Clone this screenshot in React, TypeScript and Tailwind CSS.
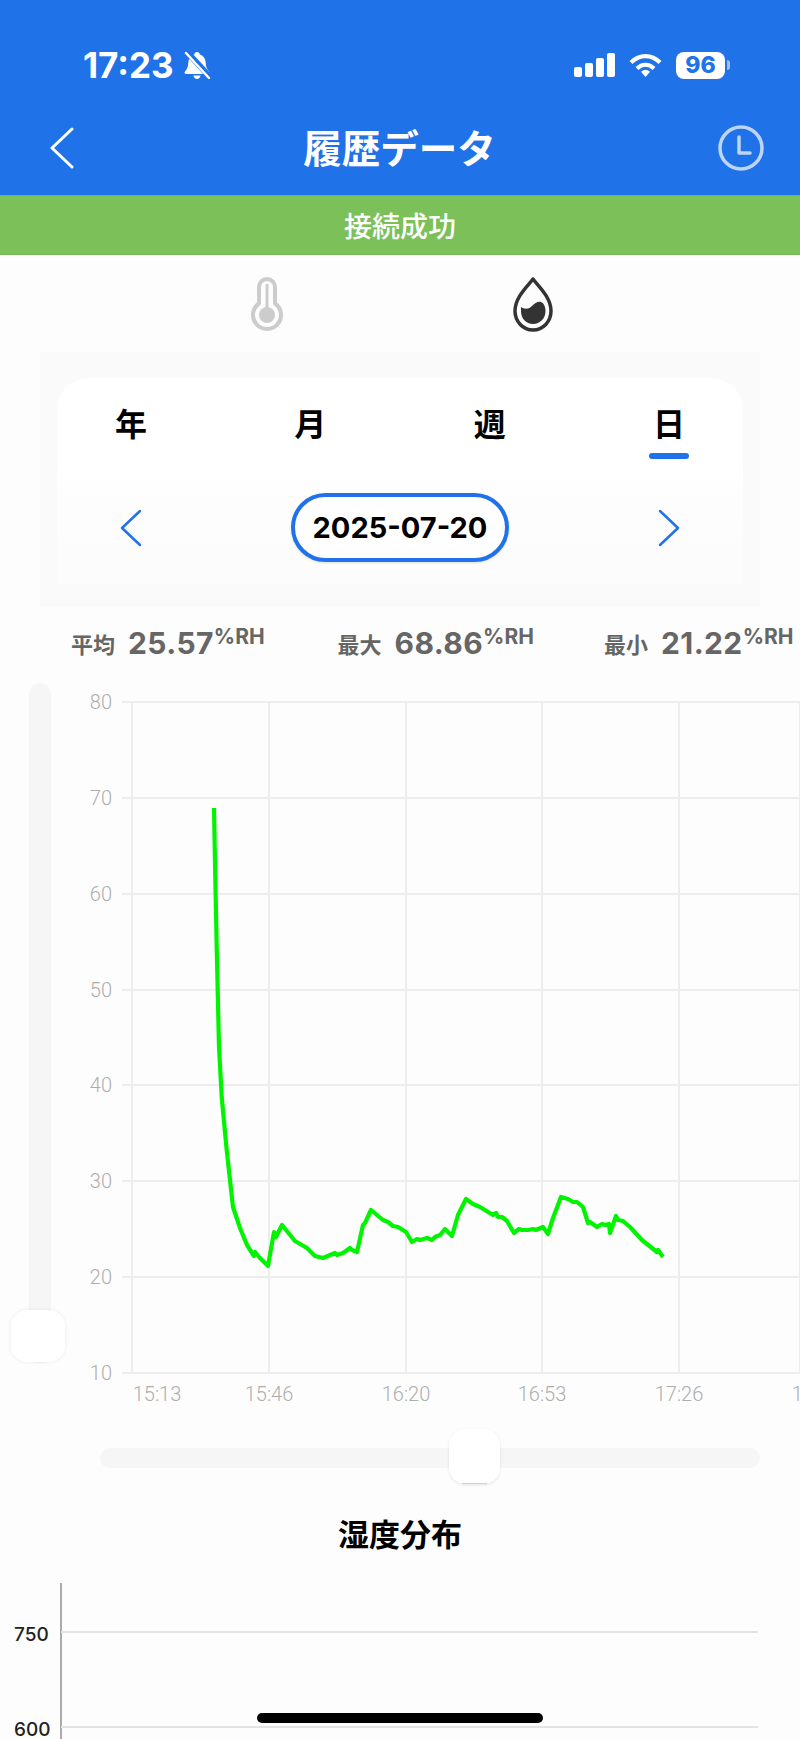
const linePoints =
  "214,808 215,863 216.7,947 219,1047 221.7,1097 226.7,1150 233,1207 240,1228 247,1245 254,1256 255,1252 260,1258 268,1266 274,1232 276,1237 282,1225 295,1241 307,1248 315,1256 323,1258 335,1253 337,1255 343,1253 350,1248 352,1250 357,1252 363,1225 365,1223 371,1210 377,1215 383,1220 388,1222 393,1226 398,1227 406,1232 412,1242 417,1239 420,1240 427,1238 432,1240 435,1237 440,1235 445,1229 452,1236 458,1215 466,1199 473,1204 480,1207 493,1215 496,1213 498,1217 502,1217 507,1221 514,1233 519,1229 522,1230 528,1230 533,1229 536,1230 543,1227 548,1234 553,1218 561,1197 568,1199 573,1202 577,1202 583,1207 588,1223 590,1222 597,1227 602,1224 605,1225 609,1224 610,1233 616,1216 618,1220 623,1221 630,1227 642,1240 657,1252 658,1250 663,1257";

const yTicks = [
  { label: "80", y: 702 },
  { label: "70", y: 798 },
  { label: "60", y: 894 },
  { label: "50", y: 990 },
  { label: "40", y: 1085 },
  { label: "30", y: 1181 },
  { label: "20", y: 1277 },
  { label: "10", y: 1373 },
];

const xTicks = [
  { label: "15:13", x: 132, tx: 157 },
  { label: "15:46", x: 269, tx: 269 },
  { label: "16:20", x: 406, tx: 406 },
  { label: "16:53", x: 542, tx: 542 },
  { label: "17:26", x: 679, tx: 679 },
  { label: "18:00", x: 800, tx: 816 },
];

const stats = [
  { label: "平均", value: "25.57" },
  { label: "最大", value: "68.86" },
  { label: "最小", value: "21.22" },
];

const latin = "font-['Inter','Noto_Sans_CJK_JP',sans-serif]";

function StatusBar() {
  return (
    <div className="flex h-[40px] items-center justify-between pl-[83px] pr-[70px]">
      <div className="flex items-center gap-[9px]">
        <span className={`${latin} text-[35px] font-bold leading-none text-white`}>17:23</span>
        <svg width="28" height="28" viewBox="0 0 28 28" fill="white">
          <path d="M14 1c1.6 0 2.6 1 2.8 2.4 4 1.2 5.7 4.6 5.9 8.6.2 3.6 1.2 6.3 3.3 8.5.9 1 .3 2.5-1.1 2.5H3.1C1.7 23 1.1 21.5 2 20.5c2.1-2.2 3.1-4.9 3.3-8.5.2-4 1.9-7.4 5.9-8.6C11.400 2 12.400 1 14 1z" />
          <path d="M10.500 24.500h7C17.200 26.600 15.800 28 14 28s-3.200-1.400-3.500-3.500z" />
          <path d="M4 1l23 25" stroke="#2072e8" strokeWidth="6" />
          <path d="M3 2l23 25" stroke="white" strokeWidth="2.400" strokeLinecap="round" />
        </svg>
      </div>
      <div className="flex items-center gap-[14px]">
        <svg width="41" height="24" viewBox="0 0 41 24" fill="white">
          <rect x="0" y="14" width="8" height="10" rx="2" />
          <rect x="11" y="10" width="8" height="14" rx="2" />
          <rect x="22" y="5" width="8" height="19" rx="2" />
          <rect x="33" y="0" width="8" height="24" rx="2" />
        </svg>
        <svg width="33" height="24" viewBox="0 0 33 24" fill="none" stroke="white" strokeWidth="4.200">
          <path d="M2 9.500C10.500 1 22.500 1 31 9.500" />
          <path d="M8 15.500c5-5 12-5 17 0" />
          <path d="M12 18.800c3-2.700 6-2.700 9 0L16.500 24z" fill="white" stroke="none" />
        </svg>
        <div className="flex items-center gap-[2px]">
          <div className="flex h-[27px] w-[49px] items-center justify-center rounded-[8px] bg-white">
            <span className={`${latin} text-[23px] font-extrabold leading-none text-[#2072e8]`}>96</span>
          </div>
          <div className="h-[10px] w-[3px] rounded-r-full bg-[#9dc0f3]" />
        </div>
      </div>
    </div>
  );
}

function NavBar() {
  return (
    <div className="mt-[38px] flex h-[50px] items-center justify-between pl-[50px] pr-[36px]">
      <svg width="24" height="42" viewBox="0 0 24 42" fill="none" stroke="white" strokeWidth="3" strokeLinecap="round" strokeLinejoin="round">
        <path d="M22 2L2 21l20 19" />
      </svg>
      <h1 className="mb-[4px] ml-[7px] font-['Noto_Sans_CJK_JP',sans-serif] text-[38.500px] font-bold leading-none text-white">履歴データ</h1>
      <svg width="46" height="46" viewBox="0 0 46 46" fill="none" stroke="#bcd5f8" strokeWidth="3.500" strokeLinecap="round" strokeLinejoin="round">
        <circle cx="23" cy="23" r="21" />
        <path d="M21 12v16h11" />
      </svg>
    </div>
  );
}

function TempIcon() {
  return (
    <svg width="34" height="56" viewBox="0 0 34 56" fill="none" stroke="#cccccc" strokeWidth="4">
      <path d="M9 10a8 8 0 0 1 16 0V26.500a14 14 0 1 1-16 0z" strokeLinejoin="round" />
      <path d="M17 7v24" strokeWidth="3" />
      <circle cx="17" cy="38" r="8" fill="#cccccc" stroke="none" />
    </svg>
  );
}

function DropIcon() {
  return (
    <svg width="40" height="55" viewBox="0 0 40 55" fill="none">
      <path d="M20 2C15 9 2 20 2 34c0 10.500 8 19 18 19s18-8.500 18-19C38 20 25 9 20 2z" stroke="#333333" strokeWidth="3.500" strokeLinejoin="round" />
      <path d="M8 30c3 2 7 3 11-1 3-3 6-5 9-4 3 1 4.500 5 4.500 9 0 7.500-5.500 13-12.500 13S8 41.500 8 34z" fill="#333333" />
    </svg>
  );
}

function DateChevron({ dir }: { dir: "left" | "right" }) {
  return (
    <svg width="22" height="38" viewBox="0 0 22 38" fill="none" stroke="#2072e8" strokeWidth="2.500" strokeLinecap="round" strokeLinejoin="round">
      <path d={dir === "left" ? "M20 2L2 19l18 17" : "M2 2l18 17L2 36"} />
    </svg>
  );
}

function DateCard() {
  return (
    <div className="mx-[40px] h-[255px] bg-[#fafafa] px-[17px] pt-[26px]">
      <div className="h-[206px] rounded-t-[32px] bg-gradient-to-b from-white from-40% to-[#fcfcfc] to-80%">
        <div className="flex justify-between px-[58px] pt-[28px]">
          {["年", "月", "週"].map((t) => (
            <span key={t} className="font-['Noto_Sans_CJK_JP',sans-serif] text-[32px] font-bold leading-[32px] text-black">{t}</span>
          ))}
          <div className="relative">
            <span className="font-['Noto_Sans_CJK_JP',sans-serif] text-[32px] font-bold leading-[32px] text-black">日</span>
            <div className="absolute left-[-4px] top-[47px] h-[6px] w-[40px] rounded-full bg-[#2072e8]" />
          </div>
        </div>
        <div className="mt-[51px] flex items-center justify-between px-[63px]">
          <DateChevron dir="left" />
          <div className={`${latin} flex h-[69px] w-[218px] items-center justify-center rounded-full border-[4px] border-[#2072e8] bg-white text-[29px] font-bold text-black shadow-sm`}>
            2025-07-20
          </div>
          <DateChevron dir="right" />
        </div>
      </div>
    </div>
  );
}

function Stats() {
  return (
    <div className="flex h-[76px] items-center whitespace-nowrap pb-[4px] pl-[71px]">
      {stats.map((s) => (
        <div key={s.label} className="flex w-[266.500px] shrink-0 items-center font-bold text-[#666666]">
          <span className="font-['Noto_Sans_CJK_JP',sans-serif] text-[22px]">{s.label}</span>
          <span className={`${latin} ml-[13px] text-[30px] tracking-[0.4px]`}>{s.value}</span>
          <span className={`${latin} mb-[12px] text-[21px]`}>%RH</span>
        </div>
      ))}
    </div>
  );
}

function VerticalSlider() {
  return (
    <div className="w-[80px] shrink-0 pl-[29px]">
      <div className="relative h-[680px] w-[22px] rounded-full bg-[#f6f6f6]">
        <div className="absolute left-[-18px] top-[627px] h-[52px] w-[54px] rounded-[16px] bg-white shadow-[0_0_4px_rgba(0,0,0,0.08)]" />
      </div>
    </div>
  );
}

function LineChart() {
  return (
    <svg width="720" height="727" viewBox="80 683 720 727" className="shrink-0 font-['Roboto',sans-serif]">
      {yTicks.map((t) => (
        <g key={t.label}>
          <line x1="122" x2="800" y1={t.y} y2={t.y} stroke="#ededed" strokeWidth="2" />
          <text x="112" y={t.y + 7} textAnchor="end" fontSize="20" fontWeight="300" fill="#adadad">{t.label}</text>
        </g>
      ))}
      {xTicks.map((t) => (
        <g key={t.label}>
          <line x1={t.x} x2={t.x} y1="702" y2="1373" stroke="#ededed" strokeWidth="2" />
          <text x={t.tx} y="1401" textAnchor="middle" fontSize="20" fontWeight="300" fill="#adadad">{t.label}</text>
        </g>
      ))}
      <polyline points={linePoints} fill="none" stroke="#00f400" strokeWidth="4.200" strokeLinejoin="round" />
    </svg>
  );
}

function HorizontalSlider() {
  return (
    <div className="mt-[19px] flex justify-end pr-[40px]">
      <div className="relative mt-[19px] h-[20px] w-[660px] rounded-full bg-[#f6f6f6]">
        <div className="absolute left-[349px] top-[-19px] h-[55px] w-[51px] rounded-[16px] bg-white shadow-[0_1px_3px_rgba(0,0,0,0.1)]">
          <div className="absolute bottom-0 left-[13px] h-px w-[25px] bg-[#d0d0d0]" />
        </div>
      </div>
    </div>
  );
}

function BarChart() {
  return (
    <svg width="800" height="156" viewBox="0 1583 800 156" className="mt-[25px] block font-['Inter',sans-serif]">
      <line x1="61" x2="61" y1="1583" y2="1739" stroke="#aaaaaa" strokeWidth="2" />
      <line x1="61" x2="758" y1="1632" y2="1632" stroke="#e3e3e3" strokeWidth="2" />
      <line x1="61" x2="758" y1="1727" y2="1727" stroke="#e3e3e3" strokeWidth="2" />
      <text x="14" y="1641" fontSize="19" fontWeight="500" fill="#222222">750</text>
      <text x="14" y="1736" fontSize="19" fontWeight="500" fill="#222222">600</text>
    </svg>
  );
}

export default function App() {
  return (
    <div className="relative h-[1739px] w-[800px] overflow-hidden bg-[#fdfdfd]">
      <header className="h-[195px] bg-[#2072e8] pt-[45px]">
        <StatusBar />
        <NavBar />
      </header>
      <div className="flex h-[60px] items-center justify-center border-y border-[#74b854] bg-[#7cc05a] font-['Noto_Sans_CJK_JP',sans-serif] text-[28px] font-medium text-white">
        接続成功
      </div>
      <div className="flex h-[97px] items-start pt-[22px]">
        <div className="ml-[250px]"><TempIcon /></div>
        <div className="ml-[229px]"><DropIcon /></div>
      </div>
      <DateCard />
      <Stats />
      <div className="flex">
        <VerticalSlider />
        <LineChart />
      </div>
      <HorizontalSlider />
      <h2 className="mt-[40px] h-[50px] text-center font-['Noto_Sans_CJK_JP',sans-serif] text-[31px] font-bold leading-[50px] text-black">湿度分布</h2>
      <BarChart />
      <div className="absolute bottom-[16px] left-[257px] h-[10px] w-[286px] rounded-full bg-black" />
    </div>
  );
}
